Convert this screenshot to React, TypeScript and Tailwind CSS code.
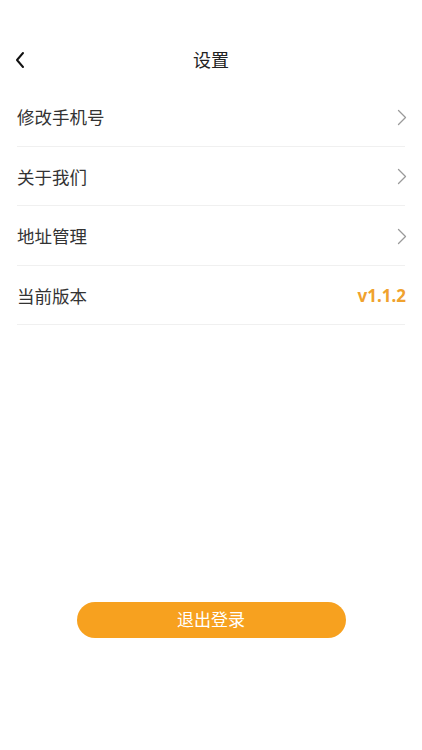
const font = { fontFamily: '"Noto Sans", "Noto Sans CJK SC", sans-serif' };

function Chevron() {
  return (
    <svg width="10" height="17" viewBox="0 0 10 17" fill="none" className="shrink-0 mr-[-2px]">
      <path d="M1.5 1.5 L8.5 8.5 L1.5 15.5" stroke="#9a9a9a" strokeWidth="1.3" strokeLinecap="round" strokeLinejoin="round" />
    </svg>
  );
}

const rows = ["修改手机号", "关于我们", "地址管理"];

export default function App() {
  return (
    <div className="w-[422px] h-[750px] bg-white flex flex-col" style={font}>
      {/* Header */}
      <div className="mt-[35px] h-[50px] relative flex items-center justify-center">
        <button className="absolute left-[14px] top-[16px]">
          <svg width="12" height="18" viewBox="0 0 12 18" fill="none">
            <path d="M9 2 L3 9 L9 16" stroke="#111" strokeWidth="2" strokeLinecap="round" strokeLinejoin="round" />
          </svg>
        </button>
        <h1 className="text-[18px] text-[#222] leading-none">设置</h1>
      </div>

      {/* List */}
      <div className="mt-[2px] px-[17px] flex flex-col">
        {rows.map((r) => (
          <div key={r} className="h-[59.5px] pt-[2px] flex items-center justify-between border-b border-[#f0f0f0]">
            <span className="text-[17.5px] text-[#333]">{r}</span>
            <Chevron />
          </div>
        ))}
        <div className="h-[59.5px] pt-[2px] flex items-center justify-between border-b border-[#f0f0f0]">
          <span className="text-[17.5px] text-[#333]">当前版本</span>
          <span className="text-[17px] font-bold text-[#f0a22e] mr-[-1px]">v1.1.2</span>
        </div>
      </div>

      {/* Logout */}
      <div className="mt-[277px] flex justify-center">
        <button className="w-[269px] h-[36px] rounded-full bg-[#f7a11f] text-white text-[17px] flex items-center justify-center">
          退出登录
        </button>
      </div>
    </div>
  );
}
